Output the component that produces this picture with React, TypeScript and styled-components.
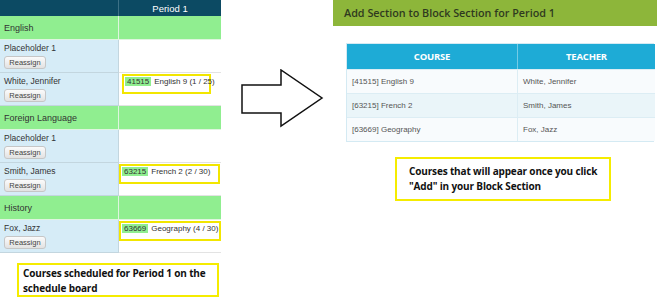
import React from "react";
import styled, { createGlobalStyle } from "styled-components";

const GlobalStyle = createGlobalStyle`
  body {
    margin: 0;
    background: #ffffff;
    font-family: "Liberation Sans", Arial, sans-serif;
  }
`;

const Page = styled.div`
  display: flex;
  align-items: flex-start;
  width: 663px;
  height: 304px;
  overflow: hidden;
`;

const LeftPane = styled.div`
  width: 221px;
  display: flex;
  flex-direction: column;
`;

const Board = styled.div`
  display: grid;
  grid-template-columns: 119px 102px;
`;

const HeadCell = styled.div<{ $main?: boolean }>`
  height: 16px;
  background: #0c4a63;
  color: #ffffff;
  font-size: 9.5px;
  display: flex;
  align-items: center;
  justify-content: center;
  border-right: ${(p) => (p.$main ? "1px solid #3d7186" : "none")};
`;

const GroupCell = styled.div<{ $main?: boolean }>`
  height: 23px;
  background: #90ee90;
  color: #333333;
  font-size: 9px;
  display: flex;
  align-items: center;
  padding-left: 4px;
  border-right: ${(p) => (p.$main ? "1px solid #dff5df" : "none")};
  border-bottom: 1px solid #dff5df;
`;

const TeacherCell = styled.div`
  height: 33px;
  box-sizing: border-box;
  background: #d6ecf7;
  border-right: 1px solid #c3d6df;
  border-bottom: 1px solid #c3d6df;
  padding: 3px 0 0 4px;
  color: #333333;
  font-size: 8.5px;
`;

const SlotCell = styled.div`
  height: 33px;
  box-sizing: border-box;
  background: #ffffff;
  border-bottom: 1px solid #e3e3e3;
  padding-top: 1px;
`;

const TeacherName = styled.div`
  line-height: 11px;
`;

const ReassignButton = styled.button`
  display: block;
  margin-top: 2px;
  width: 42px;
  height: 13px;
  padding: 0;
  border: 1px solid #c6c6c6;
  border-radius: 3px;
  background: linear-gradient(#fbfbfb, #e2e2e2);
  color: #444444;
  font-family: "Liberation Sans", Arial, sans-serif;
  font-size: 7.5px;
`;

const Highlight = styled.div<{ $w: number; $x: number }>`
  width: ${(p) => p.$w}px;
  margin-left: ${(p) => p.$x}px;
  height: 20px;
  box-sizing: border-box;
  border: 2px solid #f2e600;
  display: flex;
  align-items: flex-start;
  gap: 3px;
  padding: 1px 0 0 1px;
  font-size: 8px;
  color: #333333;
  white-space: nowrap;
`;

const CourseId = styled.span`
  background: #90ee90;
  padding: 0 2px;
  line-height: 9px;
`;

const CourseText = styled.span`
  line-height: 9px;
`;

const Note = styled.div<{ $w: number; $h: number }>`
  width: ${(p) => p.$w}px;
  height: ${(p) => p.$h}px;
  box-sizing: border-box;
  border: 2px solid #f5ec00;
  font-family: "Open Sans", "Liberation Sans", sans-serif;
  font-weight: 700;
  font-size: 10px;
  letter-spacing: -0.15px;
  line-height: 15px;
  color: #111111;
  white-space: nowrap;
`;

const LeftNote = styled(Note)`
  margin: 10px 0 0 17px;
  padding: 1px 0 0 4px;
`;

const ArrowBox = styled.div`
  margin: 69px 0 0 20px;
  width: 84px;
  height: 60px;
`;

const RightPane = styled.div`
  margin-left: 8px;
  width: 324px;
  display: flex;
  flex-direction: column;
`;

const TitleBar = styled.div`
  height: 26px;
  background: #8db63a;
  color: #2f3a1f;
  font-family: "Open Sans", Arial, sans-serif;
  font-size: 10.8px;
  font-weight: 600;
  display: flex;
  align-items: center;
  padding-left: 11px;
  padding-bottom: 2px;
  box-sizing: border-box;
`;

const SectionTable = styled.div`
  margin: 17px 0 0 13px;
  width: 308px;
  display: grid;
  grid-template-columns: 171px 137px;
  border: 1px solid #d4eaf3;
  box-sizing: border-box;
`;

const ColHead = styled.div<{ $first?: boolean }>`
  height: 25px;
  background: #1eabd6;
  color: #ffffff;
  font-family: "Open Sans", Arial, sans-serif;
  font-weight: 700;
  font-size: 9.5px;
  letter-spacing: -0.2px;
  display: flex;
  align-items: center;
  justify-content: center;
  border-right: ${(p) => (p.$first ? "1px solid #74cbe6" : "none")};
`;

const BodyCell = styled.div<{ $alt?: boolean; $first?: boolean }>`
  height: 24px;
  box-sizing: border-box;
  background: ${(p) => (p.$alt ? "#eaf5f9" : "#f8fbfd")};
  border-top: 1px solid #dcedf4;
  border-right: ${(p) => (p.$first ? "1px solid #dcedf4" : "none")};
  color: #555555;
  font-size: 8px;
  display: flex;
  align-items: center;
  padding-left: 5px;
`;

const RightNote = styled(Note)`
  margin: 15px 0 0 62px;
  padding: 5px 0 0 12px;
`;

type Slot = { id: string; name: string; w: number; x: number };
type Teacher = { name: string; slot?: Slot };
type Group = { title: string; teachers: Teacher[] };

const groups: Group[] = [
  {
    title: "English",
    teachers: [
      { name: "Placeholder 1" },
      { name: "White, Jennifer", slot: { id: "41515", name: "English 9 (1 / 25)", w: 89, x: 3 } },
    ],
  },
  {
    title: "Foreign Language",
    teachers: [
      { name: "Placeholder 1" },
      { name: "Smith, James", slot: { id: "63215", name: "French 2 (2 / 30)", w: 101, x: 0 } },
    ],
  },
  {
    title: "History",
    teachers: [
      { name: "Fox, Jazz", slot: { id: "63669", name: "Geography (4 / 30)", w: 102, x: 0 } },
    ],
  },
];

const sections = [
  { course: "[41515] English 9", teacher: "White, Jennifer" },
  { course: "[63215] French 2", teacher: "Smith, James" },
  { course: "[63669] Geography", teacher: "Fox, Jazz" },
];

const Arrow = () => (
  <svg width="84" height="60" viewBox="0 0 84 60">
    <polygon
      points="1,16 40,16 40,1 81,29 40,57 40,44 1,44"
      fill="#ffffff"
      stroke="#111111"
      strokeWidth="1.5"
      strokeLinejoin="miter"
    />
  </svg>
);

export default function App() {
  return (
    <>
      <GlobalStyle />
      <Page>
        <LeftPane>
          <Board>
            <HeadCell $main />
            <HeadCell>Period 1</HeadCell>
            {groups.map((g) => (
              <React.Fragment key={g.title}>
                <GroupCell $main>{g.title}</GroupCell>
                <GroupCell />
                {g.teachers.map((t, i) => (
                  <React.Fragment key={i}>
                    <TeacherCell>
                      <TeacherName>{t.name}</TeacherName>
                      <ReassignButton>Reassign</ReassignButton>
                    </TeacherCell>
                    <SlotCell>
                      {t.slot && (
                        <Highlight $w={t.slot.w} $x={t.slot.x}>
                          <CourseId>{t.slot.id}</CourseId>
                          <CourseText>{t.slot.name}</CourseText>
                        </Highlight>
                      )}
                    </SlotCell>
                  </React.Fragment>
                ))}
              </React.Fragment>
            ))}
          </Board>
          <LeftNote $w={202} $h={34}>
            Courses scheduled for Period 1 on the
            <br />
            schedule board
          </LeftNote>
        </LeftPane>
        <ArrowBox>
          <Arrow />
        </ArrowBox>
        <RightPane>
          <TitleBar>Add Section to Block Section for Period 1</TitleBar>
          <SectionTable>
            <ColHead $first>COURSE</ColHead>
            <ColHead>TEACHER</ColHead>
            {sections.map((s, i) => (
              <React.Fragment key={s.course}>
                <BodyCell $first $alt={i === 1}>{s.course}</BodyCell>
                <BodyCell $alt={i === 1}>{s.teacher}</BodyCell>
              </React.Fragment>
            ))}
          </SectionTable>
          <RightNote $w={216} $h={44}>
            Courses that will appear once you click
            <br />
            "Add" in your Block Section
          </RightNote>
        </RightPane>
      </Page>
    </>
  );
}
